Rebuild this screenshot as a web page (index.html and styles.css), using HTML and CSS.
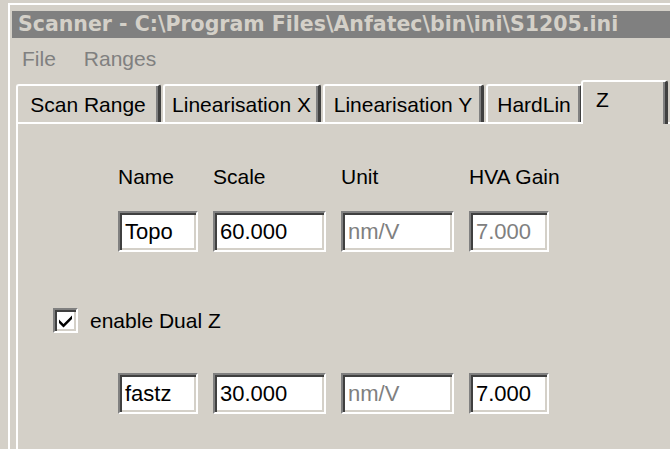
FILE: index.html
```html
<!DOCTYPE html>
<html>
<head>
<meta charset="utf-8">
<title>Scanner</title>
<link rel="stylesheet" href="styles.css">
</head>
<body>
<div class="window">
  <div class="titlebar">Scanner - C:\Program Files\Anfatec\bin\ini\S1205.ini</div>
  <div class="menubar">
    <span class="menu-item">File</span>
    <span class="menu-item">Ranges</span>
  </div>
  <div class="tabs">
    <div class="tab tab-scan">Scan Range</div>
    <div class="tab tab-linx">Linearisation X</div>
    <div class="tab tab-liny">Linearisation Y</div>
    <div class="tab tab-hard">HardLin</div>
    <div class="tab tab-z active">Z</div>
  </div>
  <div class="panel">
    <div class="fields">
      <span class="label">Name</span>
      <span class="label">Scale</span>
      <span class="label">Unit</span>
      <span class="label">HVA Gain</span>
      <div class="edit">Topo</div>
      <div class="edit">60.000</div>
      <div class="edit disabled">nm/V</div>
      <div class="edit disabled">7.000</div>
    </div>
    <label class="check-row">
      <span class="checkbox">
        <svg width="17" height="17" viewBox="0 0 17 17"><path d="M2 7.5 L6.5 12 L15 3.5 L15 7 L6.5 15.5 L2 11 Z" fill="#000"/></svg>
      </span>
      <span class="check-label">enable Dual Z</span>
    </label>
    <div class="fields fields-dual">
      <div class="edit">fastz</div>
      <div class="edit">30.000</div>
      <div class="edit disabled">nm/V</div>
      <div class="edit">7.000</div>
    </div>
  </div>
</div>
</body>
</html>
```

FILE: styles.css
```css
html, body {
  margin: 0;
  padding: 0;
  height: 100%;
  overflow: hidden;
  background: #d4d0c8;
  font-family: "Liberation Sans", Arial, sans-serif;
  font-size: 21px;
  color: #000;
}

.window {
  margin: 3px 0 0 8px;
  border-top: 2px solid #fff;
  border-left: 2px solid #fff;
  padding: 6px 0 0 2px;
  height: calc(100% - 3px);
  box-sizing: border-box;
  display: flex;
  flex-direction: column;
}

.titlebar {
  height: 27px;
  flex: none;
  background: #808080;
  color: #d4d0c8;
  font-family: "DejaVu Sans", sans-serif;
  font-weight: bold;
  font-size: 20.5px;
  line-height: 27px;
  padding-left: 6px;
  white-space: nowrap;
  overflow: hidden;
}

.menubar {
  height: 42px;
  flex: none;
  display: flex;
  align-items: center;
  gap: 28px;
  padding-left: 10px;
  color: #808080;
}

.tabs {
  display: flex;
  flex: none;
  align-items: flex-end;
  gap: 2px;
  height: 42px;
  padding-left: 4px;
  position: relative;
  z-index: 1;
}

.tab {
  height: 38px;
  box-sizing: border-box;
  border-top: 2px solid #fff;
  border-left: 2px solid #fff;
  border-right: 3px solid #404040;
  box-shadow: inset -2px 0 0 #808080;
  border-radius: 3px 3px 0 0;
  display: flex;
  align-items: center;
  justify-content: center;
  white-space: nowrap;
  padding-top: 2px;
}

.tab-scan { width: 145px; }
.tab-linx { width: 158px; }
.tab-liny { width: 161px; }
.tab-hard { width: 97px; }

.tab.active {
  width: 87px;
  height: 44px;
  margin-left: -4px;
  margin-bottom: -2px;
  background: #d4d0c8;
  justify-content: flex-start;
  padding: 0 0 6px 13px;
}

.panel {
  flex: 1;
  margin-left: 4px;
  border-top: 2px solid #fff;
  border-left: 2px solid #fff;
  padding: 41px 0 0 100px;
}

.fields {
  display: grid;
  grid-template-columns: 80px 113px 113px 80px;
  column-gap: 15px;
  row-gap: 22px;
  width: max-content;
}

.fields-dual {
  margin-top: 40px;
}

.label {
  line-height: 24px;
  white-space: nowrap;
}

.edit {
  height: 41px;
  box-sizing: border-box;
  background: #fff;
  border-top: 2px solid #808080;
  border-left: 2px solid #808080;
  border-right: 2px solid #fff;
  border-bottom: 2px solid #fff;
  box-shadow: inset 2px 2px 0 #404040, inset -2px -2px 0 #d4d0c8;
  padding: 0 0 0 5px;
  display: flex;
  align-items: center;
  font-size: 22px;
  white-space: nowrap;
}

.edit.disabled {
  color: #808080;
}

.check-row {
  display: flex;
  align-items: center;
  gap: 12px;
  margin: 56px 0 0 -65px;
  width: max-content;
}

.checkbox {
  width: 25px;
  height: 25px;
  box-sizing: border-box;
  background: #fff;
  border-top: 2px solid #808080;
  border-left: 2px solid #808080;
  border-right: 2px solid #fff;
  border-bottom: 2px solid #fff;
  box-shadow: inset 2px 2px 0 #404040, inset -2px -2px 0 #d4d0c8;
  display: flex;
  align-items: center;
  justify-content: center;
}

.check-label {
  line-height: 25px;
}
```
